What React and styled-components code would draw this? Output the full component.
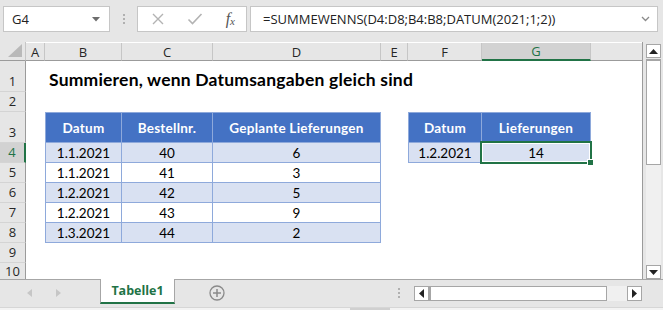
import styled, { createGlobalStyle } from 'styled-components';

const GlobalStyle = createGlobalStyle`
  html, body {
    margin: 0;
    padding: 0;
    background: #e6e6e6;
  }
  body {
    width: 663px;
    height: 310px;
    overflow: hidden;
    font-family: 'Open Sans', sans-serif;
  }
`;

const GREEN = '#217346';
const LINE = '#8ea9db';

const columns = ['A', 'B', 'C', 'D', 'E', 'F', 'G'];
const rowNumbers = [1, 2, 3, 4, 5, 6, 7, 8, 9, 10];

const orders = [
  ['1.1.2021', 40, 6],
  ['1.1.2021', 41, 3],
  ['1.2.2021', 42, 5],
  ['1.2.2021', 43, 9],
  ['1.3.2021', 44, 2],
];

function App() {
  return (
    <Window>
      <GlobalStyle />
      <FormulaBar>
        <NameBox>
          <span>G4</span>
          <svg width='8' height='5' viewBox='0 0 8 5'>
            <path d='M0 0h8L4 4.5z' fill='#6d6d6d' />
          </svg>
        </NameBox>
        <Grip>
          <i />
          <i />
          <i />
        </Grip>
        <IconBox>
          <svg width='14' height='14' viewBox='0 0 14 14'>
            <path d='M2 2l10 10M12 2L2 12' stroke='#b3b3b3' strokeWidth='1.4' />
          </svg>
          <svg width='16' height='14' viewBox='0 0 16 14'>
            <path d='M1.5 7.5l4 4L14.5 2' stroke='#b3b3b3' strokeWidth='1.6' fill='none' />
          </svg>
          <Fx>
            f<sub>x</sub>
          </Fx>
        </IconBox>
        <FormulaInput>
          <span>=SUMMEWENNS(D4:D8;B4:B8;DATUM(2021;1;2))</span>
          <svg width='9' height='6' viewBox='0 0 9 6'>
            <path d='M1 1l3.5 3.5L8 1' stroke='#8a8a8a' strokeWidth='1.3' fill='none' />
          </svg>
        </FormulaInput>
      </FormulaBar>

      <Main>
        <Sheet>
          <Corner>
            <svg width='14' height='13' viewBox='0 0 14 13'>
              <path d='M14 0v13H0z' fill='#b9b9b9' />
            </svg>
          </Corner>
          {columns.map((c, i) => (
            <ColHead key={c} $col={i + 2} $active={c === 'G'}>
              {c}
            </ColHead>
          ))}
          <ColHead $col={9} $blank />

          {rowNumbers.map((n, i) => (
            <RowHead key={n} $row={i + 2} $active={n === 4} $cut={n === 10}>
              {n}
            </RowHead>
          ))}

          <Title>Summieren, wenn Datumsangaben gleich sind</Title>

          <TCell $col={3} $row={4} $head $first>
            Datum
          </TCell>
          <TCell $col={4} $row={4} $head>
            Bestellnr.
          </TCell>
          <TCell $col={5} $row={4} $head>
            Geplante Lieferungen
          </TCell>
          {orders.map((r, i) => [
            <TCell key={`b${i}`} $col={3} $row={i + 5} $alt={i % 2 === 0} $first>
              {r[0]}
            </TCell>,
            <TCell key={`c${i}`} $col={4} $row={i + 5} $alt={i % 2 === 0}>
              {r[1]}
            </TCell>,
            <TCell key={`d${i}`} $col={5} $row={i + 5} $alt={i % 2 === 0}>
              {r[2]}
            </TCell>,
          ])}

          <TCell $col={7} $row={4} $head $first>
            Datum
          </TCell>
          <TCell $col={8} $row={4} $head>
            Lieferungen
          </TCell>
          <TCell $col={7} $row={5} $alt $first>
            1.2.2021
          </TCell>
          <TCell $col={8} $row={5} $alt>
            14
            <Selection>
              <Handle />
            </Selection>
          </TCell>
        </Sheet>

        <VScroll>
          <ArrowBox>
            <svg width='9' height='5' viewBox='0 0 9 5'>
              <path d='M0 5h9L4.5 0z' fill='#222' />
            </svg>
          </ArrowBox>
          <VThumb />
          <Spacer />
          <ArrowBox>
            <svg width='9' height='5' viewBox='0 0 9 5'>
              <path d='M0 0h9L4.5 5z' fill='#222' />
            </svg>
          </ArrowBox>
        </VScroll>
      </Main>

      <BottomBar>
        <TabNav>
          <svg width='5' height='8' viewBox='0 0 5 8'>
            <path d='M5 0v8L0 4z' fill='#c6c6c6' />
          </svg>
          <svg width='5' height='8' viewBox='0 0 5 8'>
            <path d='M0 0v8l5-4z' fill='#c6c6c6' />
          </svg>
        </TabNav>
        <SheetTab>Tabelle1</SheetTab>
        <AddSheet>
          <svg width='16' height='16' viewBox='0 0 16 16'>
            <circle cx='8' cy='8' r='7' stroke='#8a8a8a' strokeWidth='1.3' fill='none' />
            <path d='M8 4v8M4 8h8' stroke='#8a8a8a' strokeWidth='1.5' />
          </svg>
        </AddSheet>
        <SplitGrip>
          <i />
          <i />
          <i />
        </SplitGrip>
        <HScroll>
          <ArrowBox $h>
            <svg width='5' height='9' viewBox='0 0 5 9'>
              <path d='M5 0v9L0 4.5z' fill='#222' />
            </svg>
          </ArrowBox>
          <HThumb />
          <HTrack />
          <ArrowBox $h>
            <svg width='5' height='9' viewBox='0 0 5 9'>
              <path d='M0 0v9l5-4.5z' fill='#222' />
            </svg>
          </ArrowBox>
        </HScroll>
      </BottomBar>
      <StatusStrip>
        <span />
      </StatusStrip>
    </Window>
  );
}

const Window = styled.div`
  width: 663px;
  height: 310px;
  display: flex;
  flex-direction: column;
  background: #e6e6e6;
`;

const FormulaBar = styled.div`
  height: 42px;
  box-sizing: border-box;
  padding-top: 6px;
  display: flex;
  align-items: flex-start;
`;

const NameBox = styled.div`
  margin-left: 3px;
  width: 107px;
  height: 26px;
  box-sizing: border-box;
  border: 1px solid #c6c6c6;
  background: #fff;
  display: flex;
  align-items: center;
  justify-content: space-between;
  padding: 0 9px 0 8px;
  font-size: 13px;
  color: #222;
`;

const Grip = styled.div`
  width: 27px;
  height: 26px;
  display: flex;
  flex-direction: column;
  align-items: center;
  justify-content: center;
  gap: 2px;

  i {
    width: 2px;
    height: 2px;
    background: #b0b0b0;
  }
`;

const IconBox = styled.div`
  width: 110px;
  height: 26px;
  box-sizing: border-box;
  border: 1px solid #c6c6c6;
  background: #fff;
  display: flex;
  align-items: center;
  padding: 0 11px 0 13px;
  justify-content: space-between;
`;

const Fx = styled.span`
  font-family: 'Liberation Serif', serif;
  font-style: italic;
  font-size: 16px;
  color: #555;
  line-height: 1;

  sub {
    font-size: 11px;
    vertical-align: -1px;
  }
`;

const FormulaInput = styled.div`
  margin-left: 3px;
  width: 408px;
  height: 26px;
  box-sizing: border-box;
  border: 1px solid #c6c6c6;
  background: #fff;
  display: flex;
  align-items: center;
  justify-content: space-between;
  padding: 0 7px 0 12px;
  font-size: 13px;
  color: #222;
  white-space: nowrap;
`;

const Main = styled.div`
  height: 237px;
  display: flex;
`;

const Sheet = styled.div`
  width: 643px;
  box-sizing: border-box;
  border-right: 1px solid #9b9b9b;
  background: #fff;
  display: grid;
  grid-template-columns: 26px 19px 77px 91px 168px 27px 74px 109px 1fr;
  grid-template-rows: 19px 31px 20px 31px repeat(6, 20px) 1fr;
  overflow: hidden;
  font-family: 'Lato', sans-serif;
  font-size: 13.5px;
  color: #000;
`;

const Corner = styled.div`
  grid-column: 1;
  grid-row: 1;
  background: #e6e6e6;
  box-sizing: border-box;
  border-right: 1px solid #c6c6c6;
  border-bottom: 1px solid #9b9b9b;
  display: flex;
  align-items: flex-end;
  justify-content: flex-end;
  padding: 0 3px 3px 0;
`;

const ColHead = styled.div`
  grid-column: ${(p) => p.$col};
  grid-row: 1;
  box-sizing: border-box;
  background: ${(p) => (p.$active ? '#d2d2d2' : '#e6e6e6')};
  border-right: ${(p) => (p.$blank ? 'none' : '1px solid #c6c6c6')};
  border-bottom: ${(p) => (p.$active ? `2px solid ${GREEN}` : '1px solid #9b9b9b')};
  margin-top: 1px;
  display: flex;
  align-items: center;
  justify-content: center;
  font-family: 'Open Sans', sans-serif;
  font-size: 13px;
  color: ${(p) => (p.$active ? GREEN : '#262626')};
`;

const RowHead = styled.div`
  grid-column: 1;
  grid-row: ${(p) => p.$row};
  box-sizing: border-box;
  background: ${(p) => (p.$active ? '#d2d2d2' : '#e6e6e6')};
  border-bottom: ${(p) => (p.$cut ? 'none' : '1px solid #d4d4d4')};
  border-right: ${(p) => (p.$active ? `2px solid ${GREEN}` : '1px solid #9b9b9b')};
  display: flex;
  align-items: ${(p) => (p.$cut ? 'center' : 'flex-end')};
  justify-content: center;
  padding-bottom: ${(p) => (p.$cut ? '0' : '1px')};
  font-family: 'Open Sans', sans-serif;
  font-size: 13px;
  line-height: ${(p) => (p.$cut ? '16px' : '18px')};
  color: ${(p) => (p.$active ? GREEN : '#262626')};
`;

const Title = styled.div`
  grid-column: 3 / span 6;
  grid-row: 2;
  align-self: end;
  padding: 0 0 2px 4px;
  font-size: 17.5px;
  letter-spacing: 0.2px;
  font-weight: 700;
  white-space: nowrap;
`;

const TCell = styled.div`
  position: relative;
  grid-column: ${(p) => p.$col};
  grid-row: ${(p) => p.$row};
  box-sizing: border-box;
  border-right: 1px solid ${LINE};
  border-bottom: 1px solid ${LINE};
  border-left: ${(p) => (p.$first ? `1px solid ${LINE}` : 'none')};
  border-top: ${(p) => (p.$head ? `1px solid ${LINE}` : 'none')};
  background: ${(p) => (p.$head ? '#4472c4' : p.$alt ? '#d9e1f2' : '#fff')};
  color: ${(p) => (p.$head ? '#fff' : '#000')};
  font-weight: ${(p) => (p.$head ? 700 : 400)};
  letter-spacing: ${(p) => (p.$head ? '0.25px' : '0')};
  display: flex;
  align-items: center;
  justify-content: center;
  white-space: nowrap;
`;

const Selection = styled.div`
  position: absolute;
  left: -2px;
  top: -2px;
  right: -2px;
  bottom: -2px;
  border: 2px solid ${GREEN};
  box-shadow: inset 0 0 0 1px #fff;
`;

const Handle = styled.div`
  position: absolute;
  right: -4px;
  bottom: -4px;
  width: 5px;
  height: 5px;
  background: ${GREEN};
  border: 1px solid #fff;
`;

const VScroll = styled.div`
  width: 20px;
  box-sizing: border-box;
  padding: 2px 2px 0 3px;
  display: flex;
  flex-direction: column;
`;

const ArrowBox = styled.div`
  width: 15px;
  height: ${(p) => (p.$h ? '15px' : '14px')};
  flex-shrink: 0;
  box-sizing: border-box;
  border: 1px solid #a6a6a6;
  background: #fff;
  display: flex;
  align-items: center;
  justify-content: center;
`;

const VThumb = styled.div`
  margin-top: 1px;
  height: 106px;
  box-sizing: border-box;
  border: 1px solid #a6a6a6;
  border-top-width: 2px;
  background: #fff;
`;

const Spacer = styled.div`
  flex: 1;
  background: #f0f0f0;
`;

const BottomBar = styled.div`
  height: 28px;
  box-sizing: border-box;
  border-top: 1px solid #a6a6a6;
  display: flex;
  align-items: flex-start;
`;

const TabNav = styled.div`
  width: 100px;
  height: 26px;
  display: flex;
  align-items: center;
  gap: 24px;
  padding-left: 27px;
  box-sizing: border-box;
`;

const SheetTab = styled.div`
  margin-top: -1px;
  width: 75px;
  height: 25px;
  box-sizing: border-box;
  background: #fff;
  border: 1px solid #a6a6a6;
  border-top: none;
  border-bottom: 2px solid ${GREEN};
  display: flex;
  align-items: center;
  justify-content: center;
  font-size: 12.5px;
  font-weight: 700;
  color: ${GREEN};
`;

const AddSheet = styled.div`
  margin-left: 34px;
  height: 26px;
  display: flex;
  align-items: center;
`;

const SplitGrip = styled.div`
  margin-left: 173px;
  height: 26px;
  display: flex;
  flex-direction: column;
  justify-content: center;
  gap: 2px;

  i {
    width: 2px;
    height: 2px;
    background: #b0b0b0;
  }
`;

const HScroll = styled.div`
  margin: 6px 0 0 14px;
  width: 228px;
  height: 15px;
  display: flex;
`;

const HThumb = styled.div`
  width: 178px;
  box-sizing: border-box;
  border: 1px solid #a6a6a6;
  border-left-width: 2px;
  background: #fff;
`;

const HTrack = styled.div`
  flex: 1;
  background: #f0f0f0;
`;

const StatusStrip = styled.div`
  flex: 1;
  border-top: 1px solid #d6d6d6;
  background: #f3f3f3;
  padding-left: 350px;

  span {
    display: block;
    width: 40px;
    height: 100%;
    background: #d0d0d0;
  }
`;

export default App;
